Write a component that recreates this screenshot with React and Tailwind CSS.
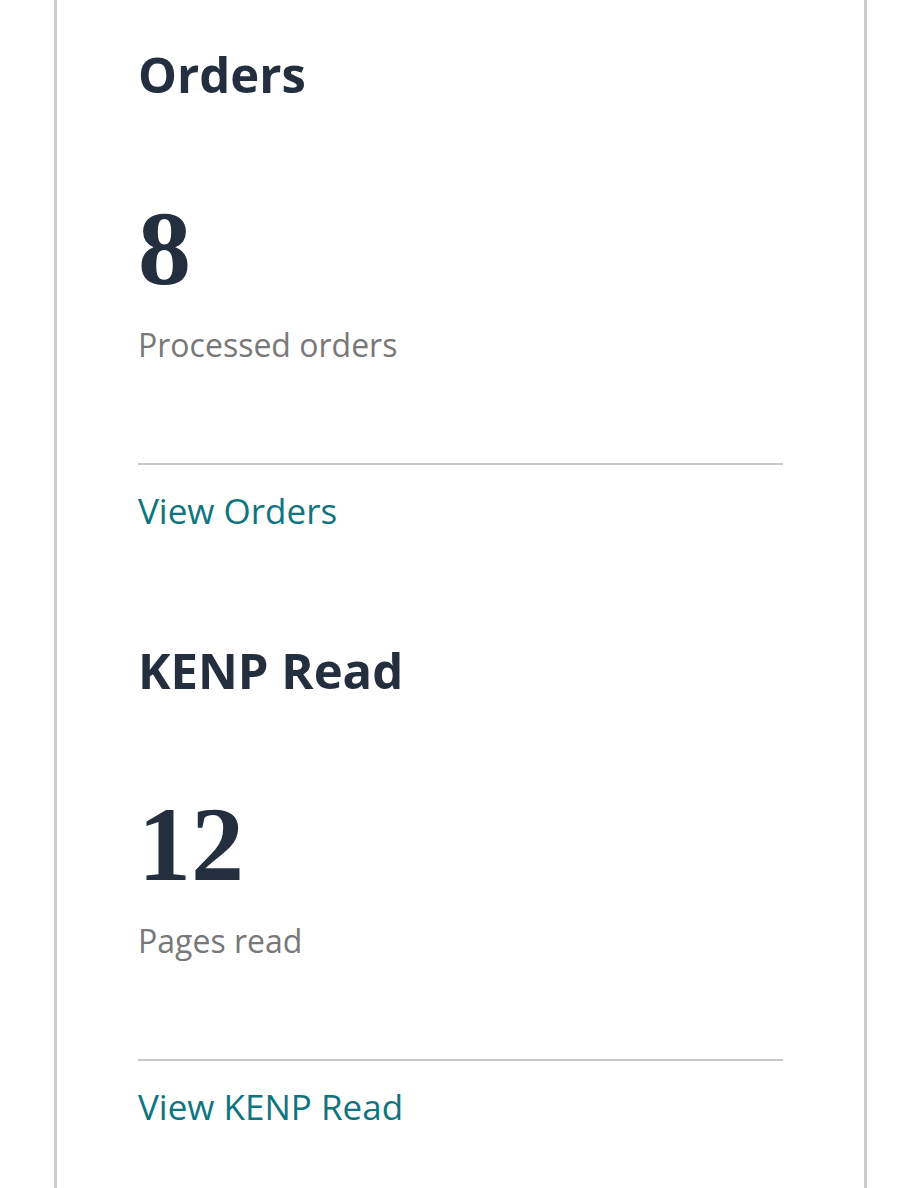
import React from 'react';

const sans = { fontFamily: '"Open Sans", "Noto Sans", sans-serif' };

const Stat = ({ title, value, label, link, first }) => (
  <section className={first ? 'pt-[50px]' : 'pt-[118px]'}>
    <h2 className="text-[49px] leading-none font-bold text-[#232f3e]">{title}</h2>
    <div
      className="mt-[97px] text-[106px] leading-none font-bold text-[#232f3e]"
      style={{ fontFamily: '"Liberation Serif", "DejaVu Serif", serif' }}
    >
      {value}
    </div>
    <p className="mt-[27px] text-[32px] leading-none text-[#787878]">{label}</p>
    <div className="mt-[102px] h-[2px] bg-[#c8c8c8]" />
    <a href="#" className="mt-[28px] block text-[35px] leading-none text-[#0e7580]">
      {link}
    </a>
  </section>
);

export default function App() {
  return (
    <div className="min-h-[1188px] bg-white" style={sans}>
      <div className="ml-[54px] w-[813px] min-h-[1188px] border-x-[3px] border-[#c9cdcf] px-[81px]">
        <Stat first title="Orders" value="8" label="Processed orders" link="View Orders" />
        <Stat title="KENP Read" value="12" label="Pages read" link="View KENP Read" />
      </div>
    </div>
  );
}
